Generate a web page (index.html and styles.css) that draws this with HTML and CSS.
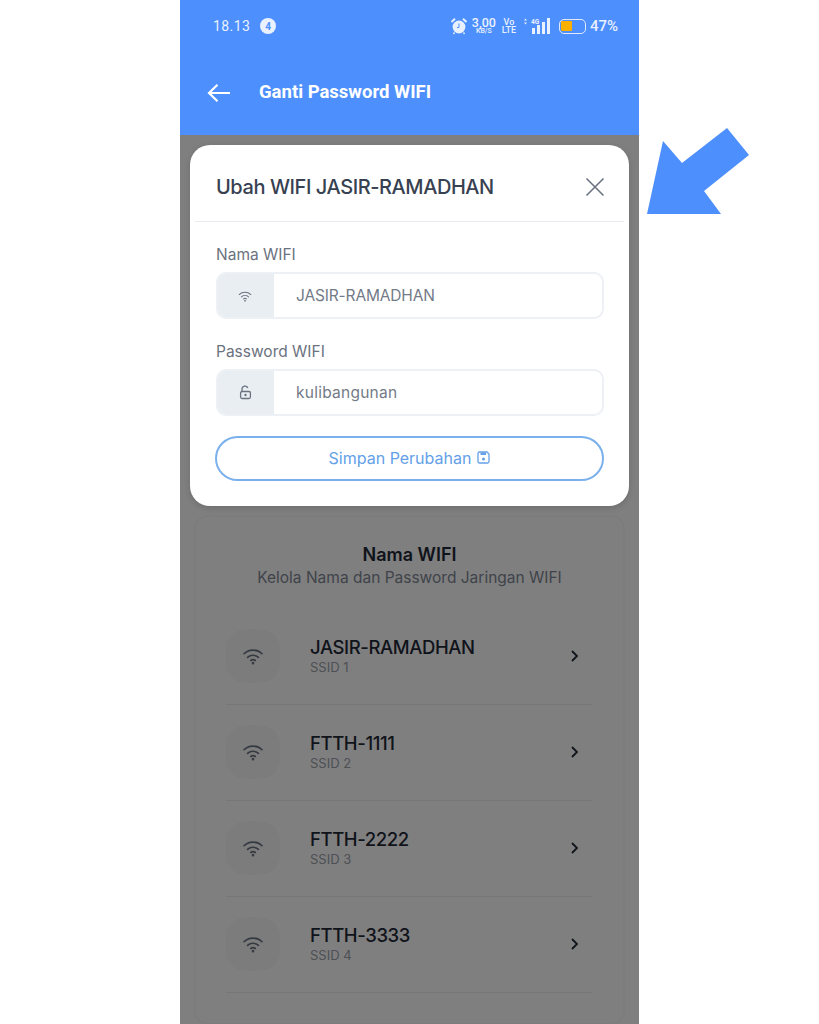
FILE: index.html
```html
<!DOCTYPE html>
<html lang="id">
<head>
<meta charset="utf-8">
<title>Ganti Password WIFI</title>
<link rel="stylesheet" href="styles.css">
</head>
<body>
<div class="phone">
  <header class="top">
    <div class="status">
      <div class="status-left">
        <span class="time">18.13</span>
        <span class="notif">4</span>
      </div>
      <div class="status-right">
        <svg class="i-alarm" width="18" height="18" viewBox="0 0 18 18"><circle cx="9" cy="10" r="6.4" fill="#e9f1ff"/><path d="M1.500 5 5 1.800M16.500 5 13 1.800" stroke="#e9f1ff" stroke-width="2" fill="none"/><path d="M9 6.500V10.500H7" stroke="#4d8ffd" stroke-width="1" fill="none"/><path d="M4.500 15.500 3.500 17M13.500 15.500l1 1.500" stroke="#e9f1ff" stroke-width="1.400"/></svg>
        <div class="stack speed"><span class="big">3,00</span><span class="small">KB/S</span></div>
        <div class="stack volte"><span class="mid">Vo</span><span class="mid">LTE</span></div>
        <svg class="i-signal" width="28" height="18" viewBox="0 0 28 18"><path d="M1 3.500 2.500 1.500 4 3.500ZM1 5.500 2.500 7.500 4 5.500Z" fill="#e9f1ff"/><rect x="9" y="11" width="3" height="6" fill="#e9f1ff"/><rect x="14" y="8" width="3" height="9" fill="#e9f1ff"/><rect x="19" y="5" width="3" height="12" fill="#e9f1ff"/><rect x="24" y="1" width="3" height="16" fill="#e9f1ff"/><text x="8" y="6.500" class="sig-text">4G</text></svg>
        <div class="battery"><span class="battery-level"></span></div>
        <span class="percent">47%</span>
      </div>
    </div>
    <div class="appbar">
      <svg class="back" width="24" height="20" viewBox="0 0 24 20"><path d="M23 10H2M10.500 1.800 2 10l8.500 8.200" fill="none" stroke="#fff" stroke-width="2.200"/></svg>
      <h1 class="appbar-title">Ganti Password WIFI</h1>
    </div>
  </header>

  <main class="content">
    <section class="card">
      <h2 class="card-title">Nama WIFI</h2>
      <p class="card-sub">Kelola Nama dan Password Jaringan WIFI</p>
      <ul class="list">
        <li class="row">
          <span class="row-icon"><svg width="22" height="18" viewBox="0 0 24 20"><use href="#wifi"/></svg></span>
          <div class="row-text"><span class="row-name">JASIR-RAMADHAN</span><span class="row-ssid">SSID 1</span></div>
          <svg class="chev" width="10" height="14" viewBox="0 0 10 14"><path d="M2 2l5 5-5 5" fill="none" stroke="#1f2937" stroke-width="1.800"/></svg>
        </li>
        <li class="row">
          <span class="row-icon"><svg width="22" height="18" viewBox="0 0 24 20"><use href="#wifi"/></svg></span>
          <div class="row-text"><span class="row-name">FTTH-1111</span><span class="row-ssid">SSID 2</span></div>
          <svg class="chev" width="10" height="14" viewBox="0 0 10 14"><path d="M2 2l5 5-5 5" fill="none" stroke="#1f2937" stroke-width="1.800"/></svg>
        </li>
        <li class="row">
          <span class="row-icon"><svg width="22" height="18" viewBox="0 0 24 20"><use href="#wifi"/></svg></span>
          <div class="row-text"><span class="row-name">FTTH-2222</span><span class="row-ssid">SSID 3</span></div>
          <svg class="chev" width="10" height="14" viewBox="0 0 10 14"><path d="M2 2l5 5-5 5" fill="none" stroke="#1f2937" stroke-width="1.800"/></svg>
        </li>
        <li class="row">
          <span class="row-icon"><svg width="22" height="18" viewBox="0 0 24 20"><use href="#wifi"/></svg></span>
          <div class="row-text"><span class="row-name">FTTH-3333</span><span class="row-ssid">SSID 4</span></div>
          <svg class="chev" width="10" height="14" viewBox="0 0 10 14"><path d="M2 2l5 5-5 5" fill="none" stroke="#1f2937" stroke-width="1.800"/></svg>
        </li>
      </ul>
    </section>

    <div class="overlay">
      <div class="modal">
        <div class="modal-head">
          <h3 class="modal-title">Ubah WIFI JASIR-RAMADHAN</h3>
          <svg class="close" width="20" height="20" viewBox="0 0 20 20"><path d="M1.500 1.500l17 17M18.500 1.500l-17 17" stroke="#6b7280" stroke-width="1.600" fill="none"/></svg>
        </div>
        <div class="modal-body">
          <label class="field-label">Nama WIFI</label>
          <div class="field">
            <span class="addon"><svg width="14" height="12" viewBox="0 0 24 20"><use href="#wifi"/></svg></span>
            <span class="field-value">JASIR-RAMADHAN</span>
          </div>
          <label class="field-label second">Password WIFI</label>
          <div class="field">
            <span class="addon"><svg width="13" height="15" viewBox="0 0 13 15"><path d="M3 6.500V4a3 3 0 0 1 5.800-1" fill="none" stroke="#6b7280" stroke-width="1.300"/><rect x="1.600" y="6.500" width="9.800" height="7" rx="1.500" fill="none" stroke="#6b7280" stroke-width="1.300"/><circle cx="6.500" cy="10" r="1.200" fill="#6b7280"/></svg></span>
            <span class="field-value pw">kulibangunan</span>
          </div>
          <div class="save">
            <span>Simpan Perubahan</span>
            <svg width="13" height="13" viewBox="0 0 13 13"><path d="M1 2.500A1.500 1.500 0 0 1 2.500 1H10l2 2v7.500a1.500 1.500 0 0 1-1.500 1.500h-8A1.500 1.500 0 0 1 1 10.500Z" fill="none" stroke="#64a0e8" stroke-width="1.300"/><rect x="3.500" y="1.500" width="5.500" height="2.500" fill="#64a0e8"/><circle cx="6.500" cy="8" r="1.500" fill="#64a0e8"/></svg>
          </div>
        </div>
      </div>
    </div>
  </main>
</div>

<svg class="arrow" width="104" height="88" viewBox="0 0 104 88"><polygon points="80,0 102,27 57,63 74,86 0,86 16,13 35,35" fill="#4d8ffd"/></svg>

<svg class="defs" width="0" height="0"><defs><g id="wifi" fill="none" stroke="#6b7280" stroke-width="1.800" stroke-linecap="round"><path d="M2 7.500a14.500 14.500 0 0 1 20 0"/><path d="M6 11.500a9 9 0 0 1 12 0"/><path d="M9.500 15a4 4 0 0 1 5 0"/><circle cx="12" cy="18" r=".6"/></g></defs></svg>
</body>
</html>
```
FILE: styles.css
```css
* { box-sizing: border-box; }
html, body { margin: 0; padding: 0; }
body {
  width: 819px;
  height: 1024px;
  overflow: hidden;
  background: #fff;
  font-family: "Inter", "Liberation Sans", sans-serif;
  position: relative;
}
.phone {
  width: 459px;
  height: 1024px;
  margin-left: 180px;
  background: #fff;
  display: flex;
  flex-direction: column;
}
.top {
  height: 135px;
  background: #4d8ffd;
  color: #fff;
  flex: none;
}
.status {
  height: 52px;
  padding: 0 21px 0 33px;
  display: flex;
  align-items: center;
  justify-content: space-between;
  color: #e9f1ff;
  font-family: "Roboto", sans-serif;
}
.status-left { display: flex; align-items: center; gap: 10px; }
.time { font-size: 14px; letter-spacing: .4px; }
.notif {
  width: 16px;
  height: 16px;
  border-radius: 50%;
  background: #e9f1ff;
  color: #4d8ffd;
  font-size: 10px;
  font-weight: 700;
  display: flex;
  align-items: center;
  justify-content: center;
}
.status-right { display: flex; align-items: center; }
.stack { display: flex; flex-direction: column; align-items: center; line-height: 1; }
.speed { margin-left: 2px; width: 28px; }
.big { font-size: 12.500px; font-weight: 500; line-height: 10px; }
.small { font-size: 7px; font-weight: 500; line-height: 7px; }
.volte { margin-left: 4px; width: 14px; }
.mid { font-size: 9px; font-weight: 500; line-height: 8px; }
.i-signal { margin-left: 7px; }
.sig-text { font-size: 6.500px; font-weight: 700; fill: #e9f1ff; font-family: "Roboto", sans-serif; }
.battery {
  width: 27px;
  height: 15px;
  margin-left: 8px;
  border: 1.500px solid #dfe9fb;
  border-radius: 5px;
  padding: 1.500px;
}
.battery-level {
  display: block;
  width: 11px;
  height: 100%;
  background: #fbb000;
  border-radius: 1px;
}
.percent { margin-left: 4px; font-size: 15px; font-weight: 500; }
.appbar {
  height: 80px;
  padding-left: 27px;
  display: flex;
  align-items: center;
  gap: 28px;
}
.back { margin-top: 2px; }
.appbar-title {
  margin: 0;
  font-family: "Roboto", sans-serif;
  font-size: 18.500px;
  font-weight: 700;
}
.content {
  flex: 1;
  position: relative;
  overflow: hidden;
  background: #fff;
  padding: 380px 14px 0;
}
.card {
  height: 510px;
  border: 2px solid #f8f9fa;
  border-radius: 14px;
  padding: 26px 30px 0;
  text-align: center;
}
.card-title {
  margin: 0;
  font-size: 18px;
  font-weight: 600;
  line-height: 24px;
  color: #1f2937;
}
.card-sub {
  margin: 0;
  font-size: 15.500px;
  line-height: 22px;
  color: #7f8794;
}
.list { list-style: none; margin: 20px 0 0; padding: 0; }
.row {
  height: 96px;
  padding-bottom: 2px;
  display: flex;
  align-items: center;
  border-bottom: 1px solid #eeeff1;
  text-align: left;
}
.row-icon {
  width: 54px;
  height: 54px;
  border-radius: 20px;
  background: #f8f9fb;
  display: flex;
  align-items: center;
  justify-content: center;
  flex: none;
}
.row-text { margin-left: 30px; flex: 1; display: flex; flex-direction: column; }
.row-name {
  font-size: 18.500px;
  font-weight: 500;
  line-height: 23px;
  color: #1f2937;
  letter-spacing: -.4px;
}
.row-ssid { font-size: 13px; line-height: 17px; color: #9aa1ab; }
.chev { margin-right: 13px; flex: none; }
.overlay {
  position: absolute;
  inset: 0;
  padding: 10px 10px 0;
  background: rgba(0, 0, 0, .5);
}
.modal {
  height: 361px;
  background: #fff;
  border-radius: 20px;
  padding: 0 5px;
  box-shadow: 0 2px 6px rgba(0, 0, 0, .15);
}
.modal-head {
  height: 77px;
  padding: 8px 19px 0 21px;
  display: flex;
  align-items: center;
  justify-content: space-between;
  border-bottom: 1px solid #e9edf1;
}
.modal-title {
  margin: 0;
  font-size: 20px;
  font-weight: 500;
  color: #374151;
  letter-spacing: -.43px;
}
.modal-body { padding: 23px 20px 0 21px; }
.field-label {
  display: block;
  font-size: 15.500px;
  line-height: 20px;
  color: #6b7280;
  margin-bottom: 7px;
}
.field-label.second { margin-top: 23px; }
.field {
  height: 47px;
  display: flex;
  border: 2px solid #edf0f4;
  border-radius: 10px;
  overflow: hidden;
}
.addon {
  width: 58px;
  margin: -2px 0 -2px -2px;
  background: #e9eef3;
  display: flex;
  align-items: center;
  justify-content: center;
  flex: none;
}
.field-value {
  align-self: center;
  padding-left: 22px;
  font-size: 15.500px;
  color: #737b88;
  letter-spacing: -.15px;
}
.field-value.pw { letter-spacing: .25px; }
.save {
  margin: 20px 0 0 -1px;
  height: 45px;
  padding-bottom: 2px;
  border: 2px solid #7ab0ec;
  border-radius: 23px;
  display: flex;
  align-items: center;
  justify-content: center;
  gap: 6px;
  color: #64a0e8;
  font-size: 16px;
}
.arrow { position: absolute; left: 647px; top: 128px; }
.defs { position: absolute; }
```
